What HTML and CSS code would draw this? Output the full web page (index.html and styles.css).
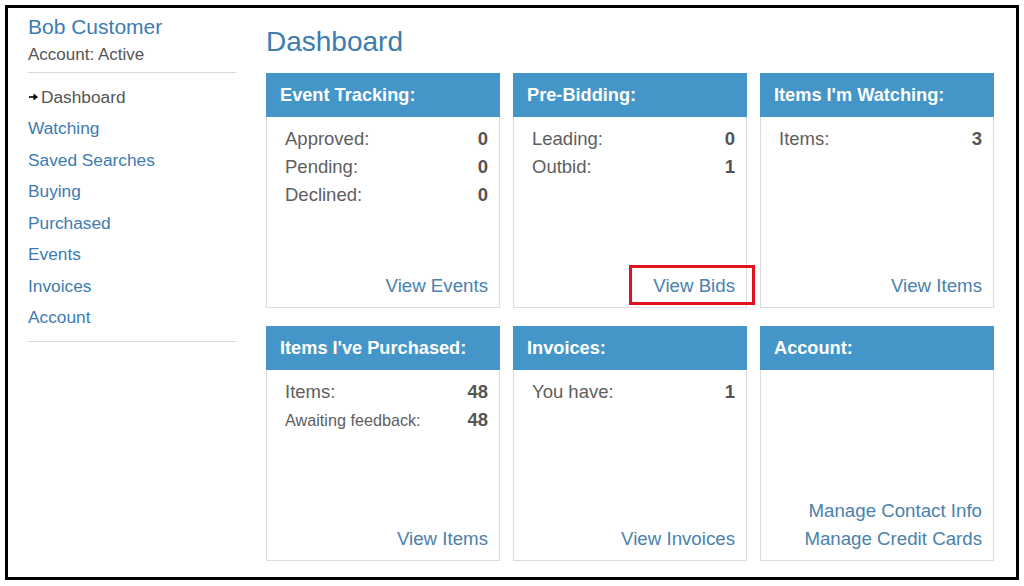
FILE: index.html
```html
<!DOCTYPE html>
<html>
<head>
<meta charset="utf-8">
<link rel="stylesheet" href="styles.css">
</head>
<body>
<div class="frame">
  <aside class="sidebar">
    <div class="user-name">Bob Customer</div>
    <div class="user-status">Account: Active</div>
    <nav class="nav">
      <div class="nav-item active"><svg class="arrow" width="9" height="8" viewBox="0 0 9 8"><path d="M0 3.2h5v1.6H0z" fill="#000"/><path d="M4.5 0.5L9 4 4.5 7.5z" fill="#000"/></svg>Dashboard</div>
      <a class="nav-item">Watching</a>
      <a class="nav-item">Saved Searches</a>
      <a class="nav-item">Buying</a>
      <a class="nav-item">Purchased</a>
      <a class="nav-item">Events</a>
      <a class="nav-item">Invoices</a>
      <a class="nav-item">Account</a>
    </nav>
  </aside>
  <main class="main">
    <h1 class="title">Dashboard</h1>
    <div class="grid">
      <section class="card">
        <div class="card-head">Event Tracking:</div>
        <div class="card-body">
          <div class="row"><span>Approved:</span><b>0</b></div>
          <div class="row"><span>Pending:</span><b>0</b></div>
          <div class="row"><span>Declined:</span><b>0</b></div>
        </div>
        <div class="card-foot"><a>View Events</a></div>
      </section>
      <section class="card">
        <div class="card-head">Pre-Bidding:</div>
        <div class="card-body">
          <div class="row"><span>Leading:</span><b>0</b></div>
          <div class="row"><span>Outbid:</span><b>1</b></div>
        </div>
        <div class="card-foot"><a>View Bids</a></div>
        <div class="highlight"></div>
      </section>
      <section class="card">
        <div class="card-head">Items I'm Watching:</div>
        <div class="card-body">
          <div class="row"><span>Items:</span><b>3</b></div>
        </div>
        <div class="card-foot"><a>View Items</a></div>
      </section>
      <section class="card">
        <div class="card-head">Items I've Purchased:</div>
        <div class="card-body">
          <div class="row"><span>Items:</span><b>48</b></div>
          <div class="row small"><span>Awaiting feedback:</span><b>48</b></div>
        </div>
        <div class="card-foot"><a>View Items</a></div>
      </section>
      <section class="card">
        <div class="card-head">Invoices:</div>
        <div class="card-body">
          <div class="row"><span>You have:</span><b>1</b></div>
        </div>
        <div class="card-foot"><a>View Invoices</a></div>
      </section>
      <section class="card">
        <div class="card-head">Account:</div>
        <div class="card-body"></div>
        <div class="card-foot"><a>Manage Contact Info</a><a>Manage Credit Cards</a></div>
      </section>
    </div>
  </main>
</div>
</body>
</html>
```

FILE: styles.css
```css
* { box-sizing: border-box; }
html, body { margin: 0; padding: 0; background: #fff; }
body {
  font-family: "Liberation Sans", Arial, sans-serif;
  color: #555;
  width: 1024px;
  height: 586px;
  overflow: hidden;
}
.frame {
  margin: 5px;
  width: 1014px;
  height: 575px;
  border: 3px solid #000;
  display: flex;
  padding: 7px 0 0 20px;
}
.sidebar {
  width: 208px;
  flex: none;
}
.user-name {
  font-size: 21px;
  line-height: 24px;
  color: #3c7cb0;
}
.user-status {
  font-size: 17px;
  line-height: 24px;
  margin-top: 4px;
  color: #555;
  padding-bottom: 5px;
  border-bottom: 1px solid #d9d9d9;
}
.nav {
  padding: 8.5px 0 7px;
  border-bottom: 1px solid #d9d9d9;
}
.nav-item {
  display: flex;
  align-items: center;
  font-size: 17.3px;
  line-height: 31.5px;
  height: 31.5px;
  color: #3c7cb0;
  cursor: pointer;
}
.nav-item.active { color: #555; }
.arrow { margin: 0 3px 0 1px; }
.main {
  margin-left: 30px;
  width: 728px;
}
.title {
  margin: 11px 0 15px;
  font-size: 28px;
  line-height: 32px;
  font-weight: normal;
  color: #3c7cb0;
}
.grid {
  display: grid;
  grid-template-columns: repeat(3, 234px);
  grid-auto-rows: 235px;
  column-gap: 13px;
  row-gap: 18px;
}
.card {
  position: relative;
  border: 1px solid #dcdcdc;
  display: flex;
  flex-direction: column;
}
.card-head {
  margin: -1px -1px 0;
  height: 44px;
  background: #4596c8;
  color: #fff;
  font-weight: bold;
  font-size: 18.2px;
  line-height: 44px;
  padding-left: 14px;
}
.card-body {
  flex: 1;
  padding: 8px 11px 0 18px;
}
.row {
  display: flex;
  justify-content: space-between;
  font-size: 18.5px;
  line-height: 28px;
}
.row span { color: #5e5e5e; }
.row.small span { font-size: 16.2px; }
.row b { color: #555; }
.card-foot {
  padding: 0 11px 7px 0;
  display: flex;
  flex-direction: column;
  align-items: flex-end;
}
.card-foot a {
  font-size: 18.7px;
  line-height: 28px;
  color: #4a82ad;
  cursor: pointer;
}
.highlight {
  position: absolute;
  left: 115px;
  top: 191px;
  width: 126px;
  height: 40px;
  border: 3px solid #e0141e;
}
```
